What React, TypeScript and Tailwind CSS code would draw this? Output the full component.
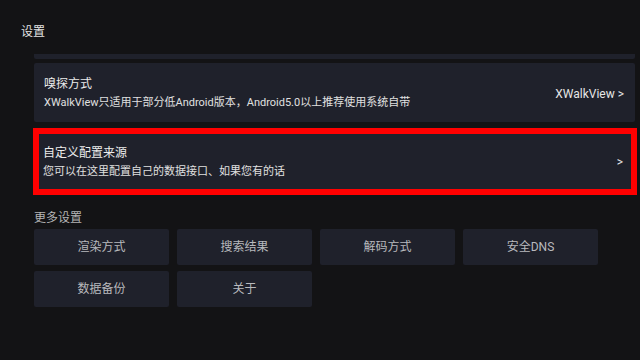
import React from "react";

const font = { fontFamily: 'Roboto, "Noto Sans CJK SC", "Noto Sans", sans-serif' };

export default function App() {
  const buttons = ["渲染方式", "搜索结果", "解码方式", "安全DNS", "数据备份", "关于"];
  return (
    <div
      className="w-[640px] h-[360px] overflow-hidden bg-[#131315] text-[#e6e6e6] flex flex-col"
      style={font}
    >
      <div className="pt-[24px] pl-[21px] text-[12px] leading-[16px] text-[#e4e4e4]">设置</div>
      <div className="mt-[14px] ml-[34px] w-[601px] flex flex-col">
        <div className="h-[5px] bg-[#1f212b] rounded-b-[2px]" />
        <div className="mt-[4px] h-[59px] bg-[#1f212b] rounded-[2px] flex items-center justify-between pl-[10px] pr-[11px]">
          <div className="flex flex-col">
            <div className="text-[12px] leading-[16px] text-[#ececec]">嗅探方式</div>
            <div className="mt-[4px] text-[11px] leading-[14px] text-[#e0e0e0]">
              XWalkView只适用于部分低Android版本，Android5.0以上推荐使用系统自带
            </div>
          </div>
          <div className="text-[12px] leading-[14px] text-[#e6e6e6] mt-[2px]">XWalkView &gt;</div>
        </div>
        <div className="mt-[6px] -ml-[1px] w-[604px] h-[67px] border-[6px] border-[#ff0000] bg-[#1f212b] flex items-center justify-between pl-[4px] pr-[8px]">
          <div className="flex flex-col">
            <div className="text-[12px] leading-[16px] text-[#ececec]">自定义配置来源</div>
            <div className="mt-[4px] text-[11px] leading-[14px] text-[#e0e0e0]">
              您可以在这里配置自己的数据接口、如果您有的话
            </div>
          </div>
          <div className="text-[12px] leading-[14px] text-[#e6e6e6]">&gt;</div>
        </div>
      </div>
      <div className="mt-[15px] ml-[34px] text-[12px] leading-[16px] text-[#b4b4b4]">更多设置</div>
      <div className="mt-[3px] ml-[34px] grid grid-cols-[repeat(4,135px)] gap-x-[8px] gap-y-[6px]">
        {buttons.map((b) => (
          <div
            key={b}
            className="h-[36px] rounded-[2px] bg-[#1f212b] flex items-center justify-center text-[12px] text-[#b8b9bd]"
          >
            {b}
          </div>
        ))}
      </div>
    </div>
  );
}
